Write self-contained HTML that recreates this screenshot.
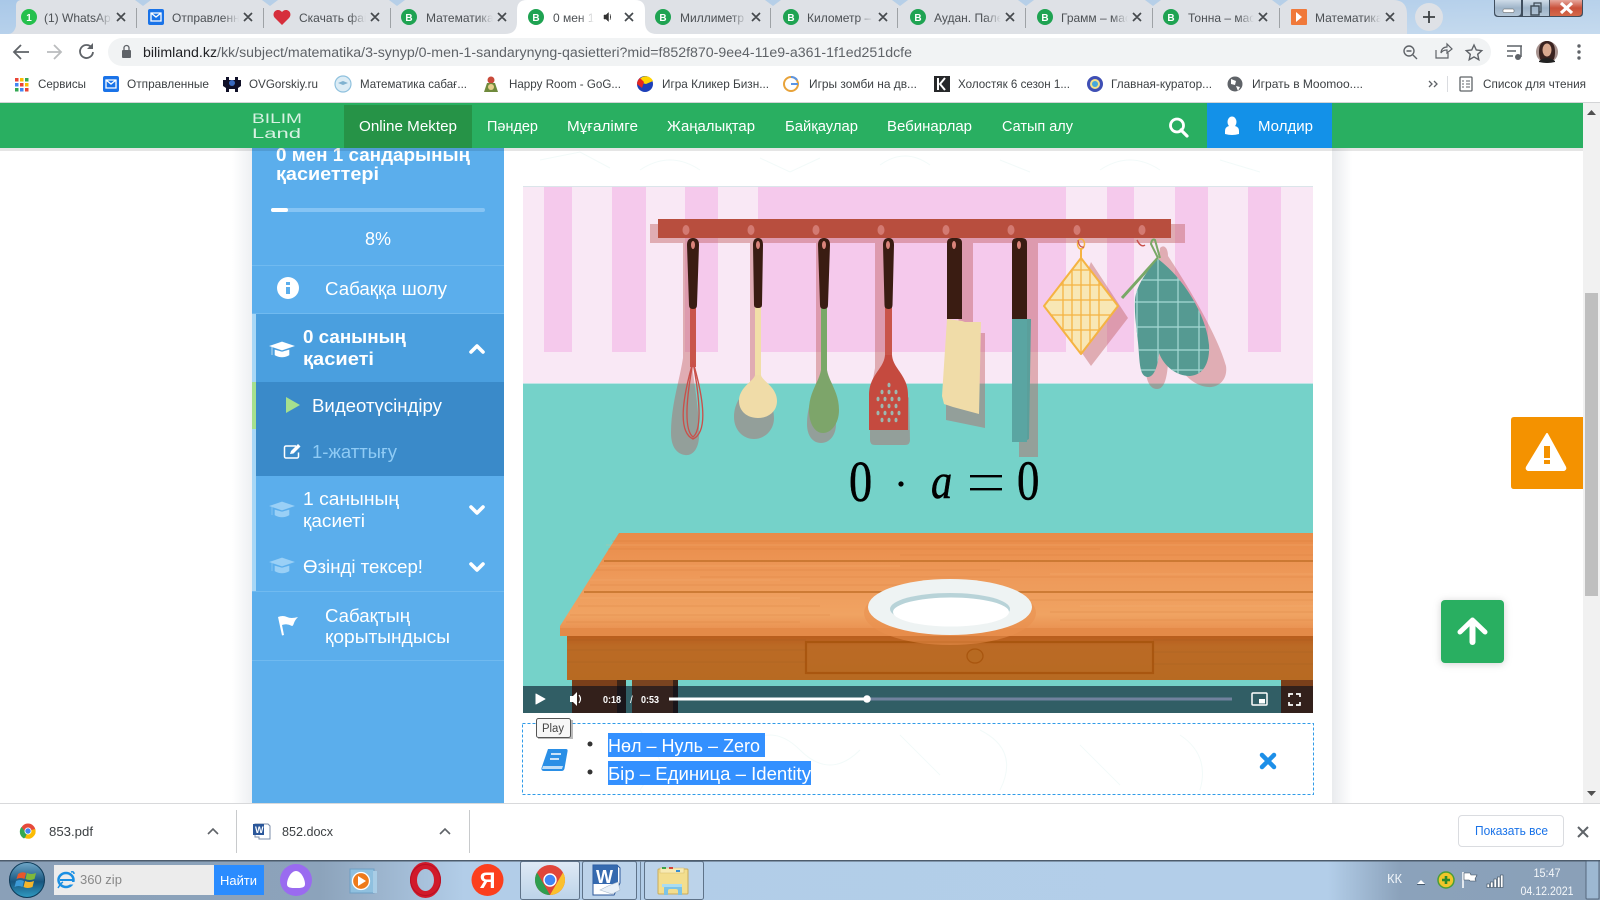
<!DOCTYPE html>
<html><head><meta charset="utf-8"><title>BilimLand</title>
<style>
html,body{margin:0;padding:0;width:1600px;height:900px;overflow:hidden;background:#fff}
svg{display:block;font-family:"Liberation Sans","DejaVu Sans",sans-serif}
.t{font-size:12px;fill:#4c5054}.bm{font-size:12px;fill:#3c4043}.nv{font-size:15px;fill:#fff}
.sb{font-size:18px;fill:#fff}.b{font-weight:bold}
.fav{font-size:10px;font-weight:bold;fill:#fff;text-anchor:middle}
</style></head><body>
<svg width="1600" height="900" viewBox="0 0 1600 900" xmlns="http://www.w3.org/2000/svg">
<defs>
<linearGradient id="fade"><stop offset="0" stop-color="#dee1e6" stop-opacity="0"/><stop offset="1" stop-color="#dee1e6"/></linearGradient>
<linearGradient id="fadeW"><stop offset="0" stop-color="#fff" stop-opacity="0"/><stop offset="1" stop-color="#fff"/></linearGradient>
<linearGradient id="shR"><stop offset="0" stop-color="#e9ebee"/><stop offset="1" stop-color="#fff"/></linearGradient>
<linearGradient id="shL"><stop offset="0" stop-color="#fff"/><stop offset="1" stop-color="#eef0f3"/></linearGradient>
<linearGradient id="sky" x1="0" y1="0" x2="1" y2="1"><stop offset="0" stop-color="#a9c8e8"/><stop offset="1" stop-color="#c5daee"/></linearGradient>
<linearGradient id="task"><stop offset="0" stop-color="#8aa0b8"/><stop offset=".2" stop-color="#8ca3bb"/><stop offset=".29" stop-color="#b2cde8"/><stop offset=".83" stop-color="#b3cee9"/><stop offset=".875" stop-color="#8ba2bb"/><stop offset="1" stop-color="#8aa0b8"/></linearGradient>
<linearGradient id="tbtn" x1="0" y1="0" x2="0" y2="1"><stop offset="0" stop-color="#dfeaf5"/><stop offset="1" stop-color="#bcd3e9"/></linearGradient>
<linearGradient id="wood" x1="0" y1="0" x2="0" y2="1"><stop offset="0" stop-color="#e98b49"/><stop offset=".45" stop-color="#ee9a5a"/><stop offset=".8" stop-color="#f0a362"/><stop offset="1" stop-color="#e78c4c"/></linearGradient>
<linearGradient id="apron" x1="0" y1="0" x2="0" y2="1"><stop offset="0" stop-color="#b8581a"/><stop offset=".3" stop-color="#bb6a25"/><stop offset="1" stop-color="#b76a22"/></linearGradient>
<linearGradient id="close" x1="0" y1="0" x2="0" y2="1"><stop offset="0" stop-color="#e6a79c"/><stop offset=".5" stop-color="#c9503a"/><stop offset="1" stop-color="#d46a4a"/></linearGradient>
<linearGradient id="wbtn" x1="0" y1="0" x2="0" y2="1"><stop offset="0" stop-color="#cfdde9"/><stop offset=".5" stop-color="#9fb5c9"/><stop offset="1" stop-color="#b4c6d7"/></linearGradient>
<linearGradient id="orb" x1="0" y1="0" x2="0" y2="1"><stop offset="0" stop-color="#6fa7c8"/><stop offset=".55" stop-color="#18567f"/><stop offset="1" stop-color="#2f9bc2"/></linearGradient>
<clipPath id="potclip"><path d="M1081 258L1118 306L1081 354L1044 306Z"/></clipPath>
<clipPath id="mitclip"><path d="M1158 259C1186 280 1207 318 1209 345C1210 362 1204 375 1190 376C1176 376 1164 366 1159 353C1158 366 1154 378 1147 377C1141 376 1140 368 1139 355C1138 335 1134 318 1135 300C1136 285 1148 270 1158 259Z"/></clipPath>
<clipPath id="videoclip"><rect x="523" y="186" width="790" height="527"/></clipPath>
</defs>

<!-- tab strip -->
<rect width="1600" height="34" fill="url(#sky)"/>
<path d="M8 34Q14 34 16 26V6Q16 0 22 0H1393Q1407 0 1407 14V34Z" fill="#dee1e6"/>
<path d="M765 0l8 6 8-6zM135 0l8 6 8-6zM262 0l8 6 8-6zM389 0l8 6 8-6zM892 0l8 6 8-6zM1018 0l8 6 8-6zM1145 0l8 6 8-6zM1272 0l8 6 8-6z" fill="#b6cfe8"/>
<g stroke="#9ea2a6" stroke-width="1"><path d="M136.5 8V28M263.5 8V28M390.5 8V28M770.5 8V28M897.5 8V28M1025.5 8V28M1152.5 8V28M1279.5 8V28"/></g>
<path d="M505 34Q517 34 517 22V10Q517 0 527 0H635Q645 0 645 10V22Q645 34 657 34Z" fill="#fff"/>
<!-- tab texts -->
<text x="44" y="22" class="t">(1) WhatsApp</text>
<text x="172" y="22" class="t">Отправленные</text>
<text x="299" y="22" class="t">Скачать файл</text>
<text x="426" y="22" class="t">Математика</text>
<text x="553" y="22" class="t">0 мен 1 сан</text>
<text x="680" y="22" class="t">Миллиметр</text>
<text x="807" y="22" class="t">Километр – м</text>
<text x="934" y="22" class="t">Аудан. Палет</text>
<text x="1061" y="22" class="t">Грамм – масс</text>
<text x="1188" y="22" class="t">Тонна – масс</text>
<text x="1315" y="22" class="t">Математика</text>
<!-- fades -->
<rect x="96" y="8" width="16" height="22" fill="url(#fade)"/><rect x="112" y="8" width="22" height="22" fill="#dee1e6"/>
<rect x="223" y="8" width="16" height="22" fill="url(#fade)"/><rect x="239" y="8" width="22" height="22" fill="#dee1e6"/>
<rect x="350" y="8" width="16" height="22" fill="url(#fade)"/><rect x="366" y="8" width="22" height="22" fill="#dee1e6"/>
<rect x="477" y="8" width="16" height="22" fill="url(#fade)"/><rect x="493" y="8" width="22" height="22" fill="#dee1e6"/>
<rect x="580" y="8" width="14" height="22" fill="url(#fadeW)"/><rect x="594" y="8" width="46" height="22" fill="#fff"/>
<rect x="731" y="8" width="16" height="22" fill="url(#fade)"/><rect x="747" y="8" width="20" height="22" fill="#dee1e6"/>
<rect x="858" y="8" width="16" height="22" fill="url(#fade)"/><rect x="874" y="8" width="20" height="22" fill="#dee1e6"/>
<rect x="985" y="8" width="16" height="22" fill="url(#fade)"/><rect x="1001" y="8" width="22" height="22" fill="#dee1e6"/>
<rect x="1112" y="8" width="16" height="22" fill="url(#fade)"/><rect x="1128" y="8" width="22" height="22" fill="#dee1e6"/>
<rect x="1238" y="8" width="16" height="22" fill="url(#fade)"/><rect x="1254" y="8" width="22" height="22" fill="#dee1e6"/>
<rect x="1365" y="8" width="16" height="22" fill="url(#fade)"/><rect x="1381" y="8" width="22" height="22" fill="#dee1e6"/>
<!-- favicons -->
<circle cx="29" cy="17" r="8" fill="#25c04d"/><text x="29" y="21" class="fav">1</text>
<rect x="148" y="9" width="16" height="16" rx="2" fill="#1a73e8"/><path d="M151 13h10v8h-10zM151 13l5 4 5-4" fill="none" stroke="#fff" stroke-width="1.3"/>
<path d="M282 25l-7-7c-3-3-1-8 3-8 2 0 3 1 4 2 1-1 2-2 4-2 4 0 6 5 3 8z" fill="#d62e3c"/>
<circle cx="409" cy="17" r="8" fill="#1fa352"/><text x="409" y="21" class="fav">B</text>
<circle cx="536" cy="17" r="8" fill="#1fa352"/><text x="536" y="21" class="fav">B</text>
<circle cx="663" cy="17" r="8" fill="#1fa352"/><text x="663" y="21" class="fav">B</text>
<circle cx="791" cy="17" r="8" fill="#1fa352"/><text x="791" y="21" class="fav">B</text>
<circle cx="918" cy="17" r="8" fill="#1fa352"/><text x="918" y="21" class="fav">B</text>
<circle cx="1045" cy="17" r="8" fill="#1fa352"/><text x="1045" y="21" class="fav">B</text>
<circle cx="1171" cy="17" r="8" fill="#1fa352"/><text x="1171" y="21" class="fav">B</text>
<rect x="1291" y="9" width="16" height="16" rx="1" fill="#f0793a"/><path d="M1296 12l6 5-6 5z" fill="#fff"/>
<path d="M604 15v4h2l2.500 2.500V12.500L606 15zM610 14q1.500 3 0 6" fill="#333" stroke="#333" stroke-width=".5"/>
<!-- tab close -->
<g stroke="#45494d" stroke-width="1.7" fill="none"><path d="M117 13l8 8M125 13l-8 8M244 13l8 8M252 13l-8 8M371 13l8 8M379 13l-8 8M498 13l8 8M506 13l-8 8M625 13l8 8M633 13l-8 8M752 13l8 8M760 13l-8 8M879 13l8 8M887 13l-8 8M1006 13l8 8M1014 13l-8 8M1133 13l8 8M1141 13l-8 8M1259 13l8 8M1267 13l-8 8M1386 13l8 8M1394 13l-8 8"/></g>
<circle cx="1429" cy="17" r="14" fill="#dee1e6"/><path d="M1429 11v12M1423 17h12" stroke="#3c4043" stroke-width="1.8"/>
<!-- window buttons -->
<path d="M1494 0V13Q1494 17 1498 17H1579Q1583 17 1583 13V0Z" fill="#3f4e5e"/>
<path d="M1495 0h26v12q0 4-4 4h-18q-4 0-4-4z" fill="url(#wbtn)"/>
<rect x="1523" y="0" width="26" height="16" fill="url(#wbtn)"/>
<path d="M1550 0h32v12q0 4-4 4h-28z" fill="url(#close)"/>
<rect x="1503" y="9" width="11" height="3.5" rx="1" fill="#fff" stroke="#555" stroke-width=".5"/>
<rect x="1531" y="6" width="8" height="9" fill="none" stroke="#3d4a55" stroke-width="1.4"/><path d="M1534 6V3h7v9h-2" fill="none" stroke="#3d4a55" stroke-width="1.2"/>
<path d="M1561 3l11 10M1572 3l-11 10" stroke="#fff" stroke-width="3.2"/>

<!-- toolbar -->
<rect y="34" width="1600" height="69" fill="#fff"/>
<rect x="108" y="38" width="1383" height="28" rx="14" fill="#f1f3f4"/>
<path d="M29 52H15M21 45l-7 7 7 7" fill="none" stroke="#5f6368" stroke-width="1.8"/>
<path d="M47 52h13M54 45l7 7-7 7" fill="none" stroke="#babcbe" stroke-width="1.8"/>
<path d="M92 48a6.5 6.5 0 1 0 1 4" fill="none" stroke="#5f6368" stroke-width="1.8"/><path d="M93 43v6h-6z" fill="#5f6368"/>
<rect x="122" y="50" width="9" height="8" rx="1" fill="#5f6368"/><path d="M124 50v-2a2.5 2.5 0 0 1 5 0v2" fill="none" stroke="#5f6368" stroke-width="1.3"/>
<text x="143" y="57" font-size="13.5" fill="#5f6368" textLength="769" lengthAdjust="spacingAndGlyphs"><tspan fill="#202124">bilimland.kz</tspan>/kk/subject/matematika/3-synyp/0-men-1-sandarynyng-qasietteri?mid=f852f870-9ee4-11e9-a361-1f1ed251dcfe</text>
<circle cx="1409" cy="51" r="5" fill="none" stroke="#5f6368" stroke-width="1.4"/><path d="M1413 55l4 4M1406.5 51h5" stroke="#5f6368" stroke-width="1.4"/>
<path d="M1436 50v8h12v-5M1441 53c0-4 3-6 6-6v-3l5 5-5 4v-3c-3 0-5 1-6 3z" fill="none" stroke="#5f6368" stroke-width="1.2"/>
<path d="M1474 45l2.300 5 5.400.6-4 3.700 1.100 5.400-4.800-2.800-4.800 2.800 1.100-5.400-4-3.700 5.400-.6z" fill="none" stroke="#5f6368" stroke-width="1.400"/>
<path d="M1507 46h11M1507 51h9M1507 56h6M1518 46h4M1521 46v11" stroke="#5f6368" stroke-width="1.5" fill="none"/><circle cx="1518" cy="57" r="3" fill="#5f6368"/>
<circle cx="1547" cy="52" r="11" fill="#a8938f"/><path d="M1539 52c0-8 3-11 8-11s8 3 8 11c0 5-1 8-3 9h-10c-2-1-3-4-3-9z" fill="#3a2320"/><ellipse cx="1547" cy="50" rx="4.500" ry="6.500" fill="#d9a98f"/><path d="M1539 61q8-6 16 0v1q-8 2-16 0z" fill="#222"/>
<circle cx="1579" cy="46" r="1.700" fill="#5f6368"/><circle cx="1579" cy="52" r="1.700" fill="#5f6368"/><circle cx="1579" cy="58" r="1.700" fill="#5f6368"/>

<!-- bookmarks -->
<g><rect x="15" y="78" width="3.500" height="3.500" fill="#ea4335"/><rect x="20" y="78" width="3.500" height="3.500" fill="#fbbc04"/><rect x="25" y="78" width="3.500" height="3.500" fill="#34a853"/><rect x="15" y="83" width="3.500" height="3.500" fill="#4285f4"/><rect x="20" y="83" width="3.500" height="3.500" fill="#ea4335"/><rect x="25" y="83" width="3.500" height="3.500" fill="#fbbc04"/><rect x="15" y="88" width="3.500" height="3.500" fill="#34a853"/><rect x="20" y="88" width="3.500" height="3.500" fill="#4285f4"/><rect x="25" y="88" width="3.500" height="3.500" fill="#ea4335"/></g>
<text x="38" y="88" class="bm" textLength="48" lengthAdjust="spacingAndGlyphs">Сервисы</text>
<rect x="103" y="76" width="16" height="16" rx="2" fill="#1a73e8"/><path d="M106 80h10v8h-10zM106 80l5 4 5-4" fill="none" stroke="#fff" stroke-width="1.300"/>
<text x="127" y="88" class="bm" textLength="82" lengthAdjust="spacingAndGlyphs">Отправленные</text>
<path d="M226 77h3v3h6v-3h3v3h3v6l-3 2v4h-3v-3h-6v3h-3v-4l-3-2v-6h3z" fill="#101028"/><circle cx="232" cy="83" r="3" fill="#3a6ac0"/>
<text x="249" y="88" class="bm" textLength="69" lengthAdjust="spacingAndGlyphs">OVGorskiy.ru</text>
<circle cx="343" cy="84" r="8" fill="#dcecf5" stroke="#8fc1de" stroke-width="1.200"/><path d="M338 83l5-2 5 2-5 2z" fill="#7fb2d0"/>
<text x="360" y="88" class="bm" textLength="107" lengthAdjust="spacingAndGlyphs">Математика сабағ...</text>
<circle cx="491" cy="80" r="3.500" fill="#c94a3a"/><path d="M484 92l3-9h8l3 9z" fill="#6f8a3c"/><circle cx="491" cy="87" r="3" fill="#e5cf8c"/>
<text x="509" y="88" class="bm" textLength="112" lengthAdjust="spacingAndGlyphs">Happy Room - GoG...</text>
<circle cx="645" cy="84" r="8" fill="#1d3fb8"/><path d="M638 82a8 8 0 0 1 15-1l-7 3z" fill="#ffd400"/><path d="M637 84a8 8 0 0 1 3-6l4 4-2 6z" fill="#e5261f"/>
<text x="662" y="88" class="bm" textLength="107" lengthAdjust="spacingAndGlyphs">Игра Кликер Бизн...</text>
<circle cx="791" cy="84" r="7" fill="none" stroke="#e8a33a" stroke-width="2"/><path d="M791 84h7M797 80a7 7 0 0 0-6-3" fill="none" stroke="#5a95e6" stroke-width="2"/>
<text x="809" y="88" class="bm" textLength="108" lengthAdjust="spacingAndGlyphs">Игры зомби на дв...</text>
<rect x="934" y="76" width="16" height="16" fill="#26282a"/><path d="M938 78v12M945 78l-5 6 5 6" fill="none" stroke="#fff" stroke-width="2"/>
<text x="958" y="88" class="bm" textLength="112" lengthAdjust="spacingAndGlyphs">Холостяк 6 сезон 1...</text>
<circle cx="1095" cy="84" r="8" fill="#3f4fb5"/><circle cx="1095" cy="84" r="5" fill="#f3e08a"/><circle cx="1095" cy="84" r="3" fill="#44a8dd"/>
<text x="1111" y="88" class="bm" textLength="101" lengthAdjust="spacingAndGlyphs">Главная-куратор...</text>
<circle cx="1235" cy="84" r="7.500" fill="#5f6368"/><path d="M1231 79l5 2-1 4-4-1zM1236 86l4 1-2 4z" fill="#fff"/>
<text x="1252" y="88" class="bm" textLength="111" lengthAdjust="spacingAndGlyphs">Играть в Moomoo....</text>
<path d="M1429 81l3 3-3 3M1434 81l3 3-3 3" fill="none" stroke="#5f6368" stroke-width="1.300"/>
<path d="M1447.500 76V92" stroke="#dadce0"/>
<rect x="1460" y="77" width="12" height="14" rx="1" fill="none" stroke="#5f6368" stroke-width="1.300"/><path d="M1462 81h2M1466 81h4M1462 84h2M1466 84h4M1462 87h2M1466 87h4" stroke="#5f6368"/>
<text x="1483" y="88" class="bm" textLength="103" lengthAdjust="spacingAndGlyphs">Список для чтения</text>
<rect y="102" width="1600" height="1" fill="#d3d4d6"/>

<!-- page body -->
<rect y="103" width="1600" height="700" fill="#fff"/>
<rect x="232" y="148" width="20" height="655" fill="url(#shL)"/>
<rect x="1332" y="148" width="20" height="655" fill="url(#shR)"/>
<!-- faint doodles -->
<g fill="none" stroke="#f2faf9" stroke-width="1">
<path d="M540 160l40-8 30 16M640 170q30-20 60 0M760 158l30 14 30-14M880 165q25-18 50 0M1000 160l30 12M1100 170q30-20 60 0M1220 160l40 12"/>
<path d="M640 730l20 30-20 30M740 750q30-30 60 0t60 0M900 735l40 40M980 730q40 20 20 60M1080 745l40 40M1180 735q30 20 20 55"/>
</g>
<!-- sidebar -->
<rect x="252" y="148" width="252" height="655" fill="#5baeec"/>
<text x="276" y="161" class="sb b" textLength="194" lengthAdjust="spacingAndGlyphs">0 мен 1 сандарының</text>
<text x="276" y="180" class="sb b" textLength="103" lengthAdjust="spacingAndGlyphs">қасиеттері</text>
<rect x="271" y="208" width="214" height="4" rx="2" fill="#86c4f4"/>
<rect x="271" y="208" width="17" height="4" rx="2" fill="#fff"/>
<text x="378" y="245" class="sb" text-anchor="middle">8%</text>
<rect x="252" y="265" width="252" height="1" fill="#70baf0"/>
<circle cx="288" cy="288" r="11" fill="#fff"/><rect x="286" y="287" width="4" height="7" fill="#5baeec"/><rect x="286" y="282" width="4" height="3" fill="#5baeec"/>
<text x="325" y="295" class="sb" textLength="122" lengthAdjust="spacingAndGlyphs">Сабаққа шолу</text>
<rect x="252" y="313" width="252" height="1" fill="#70baf0"/>
<rect x="252" y="314" width="4" height="277" fill="#a8d7f6"/>
<rect x="256" y="314" width="248" height="68" fill="#4a9fdf"/>
<path d="M270 346l12-4 12 4-12 4z M275 350v5q7 4 14 0v-5l-7 2z M272 347v8" fill="#fff" stroke="#fff" stroke-width=".6"/>
<text x="303" y="343" class="sb b" textLength="103" lengthAdjust="spacingAndGlyphs">0 санының</text>
<text x="303" y="365" class="sb b" textLength="71" lengthAdjust="spacingAndGlyphs">қасиеті</text>
<path d="M471 352l6-6 6 6" fill="none" stroke="#fff" stroke-width="3.600" stroke-linecap="round" stroke-linejoin="round"/>
<rect x="256" y="382" width="248" height="94" fill="#3a8ac9"/>
<rect x="252" y="382" width="4" height="47" fill="#a6e08e"/>
<path d="M286 397l14 8-14 8z" fill="#a6e08e"/>
<text x="312" y="412" class="sb" textLength="130" lengthAdjust="spacingAndGlyphs">Видеотүсіндіру</text>
<path d="M296 446h-10a1.500 1.500 0 0 0-1.500 1.500v9a1.500 1.500 0 0 0 1.500 1.500h11a1.500 1.500 0 0 0 1.500-1.500v-4" fill="none" stroke="#fff" stroke-width="1.500"/><path d="M290 454l1-3 7-7 2.500 2.500-7 7z" fill="#fff"/>
<text x="312" y="458" class="sb" style="fill:#8fcbf5" textLength="85" lengthAdjust="spacingAndGlyphs">1-жаттығу</text>
<g fill="#9ad0f6" stroke="#9ad0f6" stroke-width=".6"><path d="M270 506l12-4 12 4-12 4z M275 510v5q7 4 14 0v-5l-7 2z M272 507v8"/><path d="M270 562l12-4 12 4-12 4z M275 566v5q7 4 14 0v-5l-7 2z M272 563v8"/></g>
<text x="303" y="505" class="sb" textLength="96" lengthAdjust="spacingAndGlyphs">1 санының</text>
<text x="303" y="527" class="sb" textLength="62" lengthAdjust="spacingAndGlyphs">қасиеті</text>
<path d="M471 507l6 6 6-6" fill="none" stroke="#fff" stroke-width="3.600" stroke-linecap="round" stroke-linejoin="round"/>
<text x="303" y="573" class="sb" textLength="120" lengthAdjust="spacingAndGlyphs">Өзінді тексер!</text>
<path d="M471 564l6 6 6-6" fill="none" stroke="#fff" stroke-width="3.600" stroke-linecap="round" stroke-linejoin="round"/>
<rect x="252" y="591" width="252" height="1" fill="#70baf0"/>
<path d="M278 617q5-2 9 0t11 0q-3 3-4 6t-2 3q-5-3-10-1l2 10-2 .5z" fill="#fff"/>
<text x="325" y="622" class="sb" textLength="85" lengthAdjust="spacingAndGlyphs">Сабақтың</text>
<text x="325" y="643" class="sb" textLength="125" lengthAdjust="spacingAndGlyphs">қорытындысы</text>
<rect x="252" y="660" width="252" height="1" fill="#70baf0"/>

<!-- VIDEO -->
<g clip-path="url(#videoclip)">
<rect x="523" y="186" width="790" height="197" fill="#f9e8f5"/>
<g fill="#f5c9ec"><rect x="544" y="186" width="28" height="166"/><rect x="612" y="186" width="34" height="166"/><rect x="685" y="186" width="33" height="166"/><rect x="758" y="186" width="308" height="166"/><rect x="1107" y="186" width="27" height="166"/><rect x="1175" y="186" width="33" height="166"/><rect x="1248" y="186" width="33" height="166"/></g>
<rect x="523" y="383" width="790" height="330" fill="#75d2c9"/>
<rect x="523" y="383" width="790" height="1" fill="#bfe4e6"/>
<!-- shadows -->
<g opacity=".42" fill="#be5a5a">
<rect x="650" y="224" width="535" height="19"/>
<path d="M683 238h8v120c4 30 9 60 8 80-1 12-7 18-14 17-8-1-14-8-14-22 0-28 8-50 12-75z"/>
<path d="M750 238h8v150c8 6 16 16 16 30 0 12-9 21-20 21s-20-9-20-22c0-14 8-24 16-29z"/>
<path d="M816 238h8v150c8 10 12 24 12 36s-7 19-15 19-14-7-14-19c0-14 4-26 9-36z"/>
<path d="M875 238h12v130l22 30 1 42q0 5-5 5h-30q-5 0-5-5l0-45 5-27z"/>
<path d="M958 238h15v95h12v95l-39-8v-20h13z"/>
<rect x="1019" y="238" width="19" height="219"/>
<path d="M1091 262l37 56-37 48-28-40 8-12z"/>
<path d="M1160 248c4-4 8 0 8 8 20 30 50 80 58 110 2 14-8 22-18 21-12-1-24-10-32-26l-8 2c-1 16-4 26-11 26-6 0-10-6-11-16z"/>
</g>
<!-- rack -->
<rect x="658" y="219" width="513" height="19" fill="#b84e3e"/>
<g fill="#d37a72"><ellipse cx="686" cy="230" rx="3.500" ry="5"/><ellipse cx="751" cy="230" rx="3.500" ry="5"/><ellipse cx="816" cy="230" rx="3.500" ry="5"/><ellipse cx="881" cy="230" rx="3.500" ry="5"/><ellipse cx="946" cy="230" rx="3.500" ry="5"/><ellipse cx="1011" cy="230" rx="3.500" ry="5"/><ellipse cx="1077" cy="230" rx="3.500" ry="5"/><ellipse cx="1142" cy="230" rx="3.500" ry="5"/></g>
<!-- whisk -->
<rect x="690" y="305" width="6" height="62" fill="#c9554a"/>
<g fill="none" stroke="#c9504a" stroke-width="1.400"><path d="M693 362C682 400 678 432 693 439 708 432 704 400 693 362Z"/><path d="M693 362C686 400 684 430 693 437 702 430 700 400 693 362Z"/></g>
<!-- spoon -->
<rect x="755" y="305" width="6" height="80" fill="#f1dfa8"/>
<path d="M755 384h6c1 6 16 12 16 26 0 10-8 17-19 17s-19-7-19-17c0-14 15-20 16-26z" fill="#f0dca8" transform="translate(0,-9)"/>
<!-- ladle -->
<rect x="821" y="305" width="6" height="68" fill="#79a867"/>
<path d="M821 370h6c2 12 12 22 12 40 0 14-8 23-16 23s-14-9-14-23c0-18 10-28 12-40z" fill="#7da56a"/>
<!-- spatula -->
<rect x="885" y="305" width="7" height="55" fill="#c9554a"/>
<path d="M885 355h7c1 14 16 20 16 40v35h-39v-35c0-20 15-26 16-40z" fill="#c54a3f"/>
<g fill="#9db8b0"><ellipse cx="889" cy="385" rx="1.500" ry="2.300"/><ellipse cx="882" cy="392" rx="1.500" ry="2.300"/><ellipse cx="889" cy="392" rx="1.500" ry="2.300"/><ellipse cx="896" cy="392" rx="1.500" ry="2.300"/><ellipse cx="878" cy="399" rx="1.500" ry="2.300"/><ellipse cx="885" cy="399" rx="1.500" ry="2.300"/><ellipse cx="892" cy="399" rx="1.500" ry="2.300"/><ellipse cx="899" cy="399" rx="1.500" ry="2.300"/><ellipse cx="882" cy="406" rx="1.500" ry="2.300"/><ellipse cx="889" cy="406" rx="1.500" ry="2.300"/><ellipse cx="896" cy="406" rx="1.500" ry="2.300"/><ellipse cx="878" cy="413" rx="1.500" ry="2.300"/><ellipse cx="885" cy="413" rx="1.500" ry="2.300"/><ellipse cx="892" cy="413" rx="1.500" ry="2.300"/><ellipse cx="899" cy="413" rx="1.500" ry="2.300"/><ellipse cx="882" cy="420" rx="1.500" ry="2.300"/><ellipse cx="889" cy="420" rx="1.500" ry="2.300"/><ellipse cx="896" cy="420" rx="1.500" ry="2.300"/></g>
<!-- cleaver -->
<path d="M947 319l15 2 3 1h16l-2 92-26-7-9-3-2-8z" fill="#f0dca8"/>
<!-- knife -->
<path d="M1012 319h19l-2 120q-4 3-17 3z" fill="#5a9f9b"/><rect x="1012" y="319" width="15" height="123" fill="#5aa5a2"/>
<!-- handles -->
<g fill="#3a1c12">
<path d="M687 245q0-7 6-7t6 7l-2 60q0 4-4 4t-4-4z"/>
<path d="M753 245q0-7 5-7t5 7l-1 60q0 3-4 3t-4-3z"/>
<path d="M818 245q0-7 6-7t6 7l-2 60q0 4-4 4t-4-4z"/>
<path d="M883 245q0-7 5.500-7t5.500 7l-1.500 60q0 4-4 4t-4-4z"/>
<path d="M947 243q0-5 5-5h5q5 0 5 5v76h-15z"/>
<path d="M1012 243q0-5 5-5h5q5 0 5 5v76h-15z"/>
</g>
<g fill="#d9837a"><ellipse cx="693" cy="245" rx="2" ry="4"/><ellipse cx="758" cy="245" rx="2" ry="4"/><ellipse cx="824" cy="245" rx="2" ry="4"/><ellipse cx="888" cy="245" rx="2" ry="4"/><ellipse cx="954" cy="245" rx="2" ry="4"/><ellipse cx="1019" cy="245" rx="2" ry="4"/></g>
<!-- potholder -->
<path d="M1081 258L1118 306L1081 354L1044 306Z" fill="#f8e7b5"/>
<g clip-path="url(#potclip)" stroke="#f5b342" stroke-width="1.300"><path d="M1063 250v110M1072 250v110M1081 250v110M1090 250v110M1099 250v110M1040 270h80M1040 285h80M1040 300h80M1040 315h80M1040 330h80"/></g>
<path d="M1081 258L1118 306L1081 354L1044 306Z" fill="none" stroke="#f5b342" stroke-width="2" stroke-linejoin="round"/>
<path d="M1081 258v-10" stroke="#f5b342" stroke-width="2"/><ellipse cx="1081" cy="244" rx="3.500" ry="5" fill="none" stroke="#f5b342" stroke-width="1.500"/>
<path d="M1078 240q1 8 6 7" fill="none" stroke="#c9504a" stroke-width="1.200"/>
<!-- mitt -->
<path d="M1158 258L1122 298" stroke="#79a867" stroke-width="3"/>
<path d="M1158 258l-7-14q1-6 4-4l5 18" fill="none" stroke="#79a867" stroke-width="2"/>
<path d="M1137 240q4 8 8 5" fill="none" stroke="#c9504a" stroke-width="1.400"/>
<path d="M1158 259C1186 280 1207 318 1209 345C1210 362 1204 375 1190 376C1176 376 1164 366 1159 353C1158 366 1154 378 1147 377C1141 376 1140 368 1139 355C1138 335 1134 318 1135 300C1136 285 1148 270 1158 259Z" fill="#559a92"/>
<g clip-path="url(#mitclip)" stroke="#a7dad5" stroke-width="1.200"><path d="M1137 255v130M1158 255v130M1178 255v130M1199 255v130M1130 280h90M1130 302h90M1130 327h90M1130 350h90M1130 370h90"/></g>
<!-- formula -->
<g fill="#000" stroke="#000" stroke-width=".5" font-family="'Liberation Serif',serif">
<text transform="translate(849,501) scale(.8,1)" font-size="58">0</text>
<circle cx="901" cy="484" r="2.400"/>
<text transform="translate(931,498) scale(.85,1)" font-size="50" font-style="italic">a</text>
<rect x="970" y="475" width="32" height="2.400" stroke="none"/><rect x="970" y="488" width="32" height="2.400" stroke="none"/>
<text transform="translate(1017,499.500) scale(.8,1)" font-size="56">0</text>
</g>
<!-- table -->
<rect x="572" y="670" width="45" height="45" fill="#7a3f1a"/><rect x="617" y="670" width="9" height="45" fill="#3c2417"/>
<rect x="632" y="670" width="41" height="45" fill="#7a4420"/><rect x="673" y="670" width="5" height="45" fill="#3c2417"/>
<rect x="1281" y="670" width="32" height="45" fill="#7a3f1a"/>
<rect x="567" y="632" width="746" height="48" fill="url(#apron)"/>
<rect x="806" y="642" width="347" height="31" fill="none" stroke="#a9560f" stroke-width="2.200"/>
<ellipse cx="975" cy="656" rx="8" ry="7" fill="#b76a22" stroke="#a9560f" stroke-width="1.300"/>
<path d="M619 533H1313V635H560V626Z" fill="url(#wood)"/>
<path d="M560 628H1313V636H560Z" fill="#e48a48"/>
<g stroke="#c27028" stroke-width="1.500"><path d="M604 561H1313M584 592H1313"/></g>
<g stroke="#d27835" stroke-width="1" opacity=".28"><path d="M612 541H1313M608 549H1100M900 555H1313M596 570H1000M700 577H1313M590 585H1000M1000 600H1313M578 606H820M570 615H830M1050 612H1313M1060 620H1313M566 622H800"/></g>
<g stroke="#f7b77c" stroke-width="1" opacity=".3"><path d="M606 545H1313M600 566H900M1050 574H1313M590 580H780M580 598H800M1080 606H1313"/></g>
<g stroke="#9c5a20" stroke-width="1" opacity=".3"><path d="M567 640H806M1153 640H1313M567 650H806M1153 652H1313M567 662H806M1153 664H1313"/></g>
<!-- plate -->
<ellipse cx="950" cy="613" rx="86" ry="32" fill="#e98f4e" opacity=".55"/>
<ellipse cx="950" cy="607" rx="82" ry="28" fill="#eef3f3"/>
<ellipse cx="950" cy="609" rx="60" ry="16" fill="#b8d3d8"/>
<ellipse cx="951" cy="612" rx="58" ry="14.500" fill="#fff"/>
<!-- controls -->
<rect x="523" y="686" width="790" height="27" fill="#000a1e" fill-opacity=".58"/>
</g>
<path d="M536 694l9 5-9 5z" fill="#fff" stroke="#fff" stroke-linejoin="round"/>
<path d="M570 696v6h3l4 4v-14l-4 4z" fill="#fff"/><path d="M579 695q3 4 0 8" fill="none" stroke="#fff" stroke-width="1.200"/>
<text x="603" y="703" font-size="10" font-weight="bold" fill="#fff" textLength="18" lengthAdjust="spacingAndGlyphs">0:18</text>
<text x="630" y="703" font-size="10" fill="#fff">/</text>
<text x="641" y="703" font-size="10" font-weight="bold" fill="#fff" textLength="18" lengthAdjust="spacingAndGlyphs">0:53</text>
<rect x="669" y="697.500" width="563" height="3" fill="#71829e"/>
<rect x="669" y="697.500" width="198" height="3" fill="#fff"/>
<circle cx="867" cy="699" r="3.800" fill="#fff"/>
<rect x="1252" y="693" width="15" height="12" rx="1" fill="none" stroke="#fff" stroke-width="1.500"/><rect x="1259" y="699" width="6" height="4.500" fill="#fff"/>
<path d="M1289 697v-3h4M1296 694h4v3M1300 702v3h-4M1293 705h-4v-3" fill="none" stroke="#fff" stroke-width="1.700"/>
<rect x="523" y="186" width="790" height="1" fill="#dbe5ea"/>

<!-- definition box -->
<rect x="522.500" y="723.500" width="791" height="71" fill="none" stroke="#2f9be8" stroke-width="1" stroke-dasharray="3 2"/>
<path d="M548 749h18q2 0 1.500 2.500l-3 17q-.5 2.500-3 2.500H544q-3 0-2.500-3z" fill="#2a8fe6"/><path d="M543 766h20l-1 3h-20z" fill="#fff" opacity=".7"/><path d="M551 754h10M550 759h9" stroke="#fff" stroke-width="1.500"/>
<circle cx="590" cy="744" r="2.500" fill="#333"/><circle cx="590" cy="772" r="2.500" fill="#333"/>
<rect x="608" y="733" width="157" height="24" fill="#3390ff"/>
<rect x="608" y="761" width="203" height="24" fill="#3390ff"/>
<text x="608" y="752" font-size="18" fill="#fff" textLength="152" lengthAdjust="spacingAndGlyphs">Нөл – Нуль – Zero</text>
<text x="608" y="780" font-size="18" fill="#fff" textLength="203" lengthAdjust="spacingAndGlyphs">Бір – Единица – Identity</text>
<path d="M1262 755l12 12M1274 755l-12 12" stroke="#1d8fe8" stroke-width="4.500" stroke-linecap="round"/>
<!-- tooltip -->
<rect x="538" y="720" width="35" height="19" fill="#777" opacity=".5"/>
<rect x="536.500" y="718.500" width="34" height="19" rx="2" fill="#f7f7f7" stroke="#555"/>
<text x="542" y="732" font-size="11.500" fill="#444" textLength="22" lengthAdjust="spacingAndGlyphs">Play</text>

<!-- nav -->
<path d="M0 148h1583v3H0z" fill="#000" opacity=".1"/>
<rect y="103" width="1583" height="45" fill="#29af61"/>
<text x="252" y="123" font-size="14" fill="#d8f1e2" textLength="50" lengthAdjust="spacingAndGlyphs">BILIM</text>
<text x="252" y="138" font-size="14" fill="#d8f1e2" textLength="49" lengthAdjust="spacingAndGlyphs">Land</text>
<rect x="344" y="105" width="128" height="43" fill="#269347"/>
<text x="359" y="131" class="nv" textLength="98" lengthAdjust="spacingAndGlyphs">Online Mektep</text>
<text x="487" y="131" class="nv" textLength="51" lengthAdjust="spacingAndGlyphs">Пәндер</text>
<text x="567" y="131" class="nv" textLength="71" lengthAdjust="spacingAndGlyphs">Мұғалімге</text>
<text x="667" y="131" class="nv" textLength="88" lengthAdjust="spacingAndGlyphs">Жаңалықтар</text>
<text x="785" y="131" class="nv" textLength="73" lengthAdjust="spacingAndGlyphs">Байқаулар</text>
<text x="887" y="131" class="nv" textLength="85" lengthAdjust="spacingAndGlyphs">Вебинарлар</text>
<text x="1002" y="131" class="nv" textLength="71" lengthAdjust="spacingAndGlyphs">Сатып алу</text>
<circle cx="1177" cy="125.500" r="6.500" fill="none" stroke="#fff" stroke-width="2.800"/><path d="M1181 130l6 6" stroke="#fff" stroke-width="3.200" stroke-linecap="round"/>
<rect x="1207" y="103" width="125" height="45" fill="#1391e8"/>
<ellipse cx="1232" cy="122" rx="4.500" ry="5.500" fill="#fff"/><path d="M1225 134v-3q0-4 4-5h6q4 1 4 5v3q-7 2-14 0z" fill="#fff"/>
<text x="1258" y="131" class="nv" textLength="55" lengthAdjust="spacingAndGlyphs">Молдир</text>

<!-- scrollbar -->
<rect x="1583" y="103" width="17" height="700" fill="#f1f1f1"/>
<rect x="1585" y="293" width="13" height="303" fill="#bfbfbf"/>
<path d="M1587 115l4.500-5 4.500 5z" fill="#505050"/><path d="M1587 791l4.500 5 4.500-5z" fill="#505050"/>
<!-- floating -->
<path d="M1514 417h69v72h-69q-3 0-3-3v-66q0-3 3-3z" fill="#f49200"/>
<path d="M1547 434l18 33q1 2-1 3h-36q-2-1-1-3z" fill="#fff" stroke="#fff" stroke-width="2" stroke-linejoin="round"/>
<rect x="1544" y="446" width="6" height="12" fill="#f49200"/><rect x="1544" y="460" width="6" height="4" fill="#f49200"/>
<rect x="1441" y="600" width="63" height="63" rx="4" fill="#29af61" style="filter:drop-shadow(0 1px 4px rgba(0,0,0,.18))"/>
<path d="M1460 632l12.500-12 12.500 12" fill="none" stroke="#fff" stroke-width="5" stroke-linecap="round" stroke-linejoin="round"/><path d="M1472.500 622v20" stroke="#fff" stroke-width="6" stroke-linecap="round"/>

<!-- download shelf -->
<rect y="803" width="1600" height="57" fill="#fff"/>
<rect y="803" width="1600" height="1" fill="#d8d9db"/>
<circle cx="28" cy="831" r="7.500" fill="#e6493b"/><path d="M21.500 827l6.500 8-4 3.500a7.500 7.500 0 0 1-2.500-11.500z" fill="#34a853"/><path d="M35.300 829a7.500 7.500 0 0 1-10.300 9l3-7z" fill="#fbbc04"/><circle cx="28" cy="831" r="3.500" fill="#fff"/><circle cx="28" cy="831" r="2.700" fill="#4285f4"/>
<text x="49" y="836" font-size="13" fill="#3c4043" textLength="44" lengthAdjust="spacingAndGlyphs">853.pdf</text>
<path d="M208 834l5-5 5 5" fill="none" stroke="#5f6368" stroke-width="1.600"/>
<rect x="236" y="810" width="1" height="43" fill="#c8cacc"/>
<path d="M255 824h13l2 2v13h-11v-2h-4z" fill="#fff" stroke="#7b8ca8"/><rect x="253" y="824" width="11" height="11" fill="#2b579a"/><text x="255" y="833" font-size="9" font-weight="bold" fill="#fff">W</text>
<text x="282" y="836" font-size="13" fill="#3c4043" textLength="51" lengthAdjust="spacingAndGlyphs">852.docx</text>
<path d="M440 834l5-5 5 5" fill="none" stroke="#5f6368" stroke-width="1.600"/>
<rect x="469" y="810" width="1" height="43" fill="#c8cacc"/>
<rect x="1458.500" y="815.500" width="105" height="31" rx="3.500" fill="#fff" stroke="#dadce0"/>
<text x="1475" y="835" font-size="12.500" fill="#1a73e8" textLength="73" lengthAdjust="spacingAndGlyphs">Показать все</text>
<path d="M1578 827l10 10M1588 827l-10 10" stroke="#5f6368" stroke-width="2"/>

<!-- taskbar -->
<rect y="860" width="1600" height="40" fill="url(#task)"/>
<rect y="860" width="1600" height="1.500" fill="#4d5c6c"/>
<circle cx="27" cy="880" r="17.500" fill="url(#orb)" stroke="#0d3a58"/>
<path d="M18 874q4-3 8-1l-1.500 6q-4-2-8 0z" fill="#e8572a"/><path d="M27 873q4 2 9 0l-1.500 6q-5 2-9 0z" fill="#7fb83a"/><path d="M16 881q4-2 8 0l-1.500 6q-4-2-8 0z" fill="#3d9ad6"/><path d="M25 881q4 2 9 0l-1.500 6q-5 2-9 0z" fill="#f5b52a"/>
<rect x="54" y="865" width="160" height="30" fill="#ececec"/>
<ellipse cx="66" cy="880" rx="7.500" ry="7" fill="none" stroke="#1a8fe3" stroke-width="2.500"/><rect x="60" y="879" width="13" height="2" fill="#1a8fe3"/><rect x="69" y="882" width="6" height="2.500" fill="#ececec"/><path d="M58 888q3-5 5-6M71 872q3-1 3 2" fill="none" stroke="#1a8fe3" stroke-width="1.500"/>
<text x="80" y="884" font-size="13" fill="#888">360 zip</text>
<rect x="214" y="865" width="50" height="30" fill="#2a8cff"/>
<text x="220" y="885" font-size="13" fill="#fff" textLength="37" lengthAdjust="spacingAndGlyphs">Найти</text>
<circle cx="296" cy="880" r="16" fill="#9a6bf0"/><path d="M296 871c5 0 9 8 9 13 0 4-4 4-9 4s-9 0-9-4c0-5 4-13 9-13z" fill="#fff"/>
<rect x="350" y="869" width="24" height="24" fill="#8fc0df" stroke="#6f9fc4"/><rect x="373" y="871" width="4" height="22" fill="#a9cde6"/><circle cx="361" cy="881" r="8.500" fill="#ee7a1b" stroke="#fff" stroke-width="1.300"/><path d="M358 876l8 5-8 5z" fill="#fff"/>
<ellipse cx="425.500" cy="880" rx="12" ry="14.500" fill="none" stroke="#d11a2a" stroke-width="7"/><ellipse cx="425.500" cy="880" rx="15" ry="15.500" fill="none" stroke="#b70f23" stroke-width="1"/>
<circle cx="487.500" cy="880" r="16" fill="#fc3f1d"/><text x="487.500" y="888" font-size="22" font-weight="bold" fill="#fff" text-anchor="middle">Я</text>
<rect x="520.500" y="861.500" width="59" height="38" rx="2" fill="url(#tbtn)" stroke="#5f7389"/>
<rect x="582.500" y="861.500" width="54" height="38" rx="2" fill="#bcd3ea" stroke="#5f7389"/>
<rect x="644.500" y="861.500" width="59" height="38" rx="2" fill="#bcd3ea" stroke="#5f7389"/>
<rect x="640" y="861" width="1" height="39" fill="#6f859c"/>
<circle cx="550" cy="880" r="15" fill="#e0453a"/><path d="M537 872.500L546 888 550 895a15 15 0 0 1-13-22.500z" fill="#2f9e4f"/><path d="M563 872.500a15 15 0 0 1-13 22.500l8-14z" fill="#fbc02d"/><circle cx="550" cy="880" r="6.700" fill="#fff"/><circle cx="550" cy="880" r="5.300" fill="#4285f4"/>
<path d="M593 865h24l3 3v15l-6 12h-21z" fill="#fff" stroke="#2b579a"/><rect x="593" y="865" width="25" height="19" fill="#2b62ab" opacity=".95"/><text x="596" y="883" font-size="18" font-weight="bold" fill="#fff">W</text><path d="M600 890l8-4 10-4 2 8-8 4z" fill="#eaf1f8" stroke="#a8b9cb" stroke-width=".6"/>
<rect x="658" y="869" width="30" height="25" rx="1" fill="#f3de8e" stroke="#c9ab5a"/><path d="M660 868h24v5h-24z" fill="#f7eab2" stroke="#d7bc6d" stroke-width=".6"/><rect x="662" y="867" width="4" height="2" fill="#3ba34a"/><rect x="669" y="867" width="4" height="2" fill="#d4443a"/><rect x="676" y="870" width="4" height="2" fill="#3b8fd0"/><path d="M664 895v-7q0-3 3-3h12q3 0 3 3v7h-4v-4q0-2-2-2h-6q-2 0-2 2v4z" fill="#7cc3e6"/><rect x="662" y="884" width="20" height="3" fill="#a9dcf2"/>
<text x="1387" y="883" font-size="13" fill="#eef3f8" textLength="15" lengthAdjust="spacingAndGlyphs">КК</text>
<path d="M1417 884l4-4 4 4z" fill="#fff"/><rect x="1417" y="884" width="8" height="1" fill="#44586c"/>
<circle cx="1446" cy="880" r="8" fill="#f0c62a" stroke="#4b9e36" stroke-width="1.500"/><path d="M1446 876v8M1442 880h8" stroke="#2a8a2a" stroke-width="2.600"/>
<path d="M1463 872v16" stroke="#fff" stroke-width="1.500"/><path d="M1464 873h6l1 2h6l-2 4 1 2h-6l-1-1h-5z" fill="#fff" stroke="#3a4b5c" stroke-width=".6"/>
<g fill="#fff" stroke="#3a4b5c" stroke-width=".6"><rect x="1487" y="884" width="2.500" height="3.500"/><rect x="1490.500" y="882" width="2.500" height="5.500"/><rect x="1494" y="879" width="2.500" height="8.500"/><rect x="1497.500" y="877" width="2.500" height="10.500"/><rect x="1500.500" y="875" width="2.500" height="12.500"/></g>
<text x="1547" y="877" font-size="12" fill="#f4f7fa" text-anchor="middle" textLength="27" lengthAdjust="spacingAndGlyphs">15:47</text>
<text x="1547" y="895" font-size="12" fill="#f4f7fa" text-anchor="middle" textLength="53" lengthAdjust="spacingAndGlyphs">04.12.2021</text>
<rect x="1586" y="861" width="13" height="38" rx="1" fill="#9db8d2" stroke="#56697d"/>
</svg>
</body></html>
